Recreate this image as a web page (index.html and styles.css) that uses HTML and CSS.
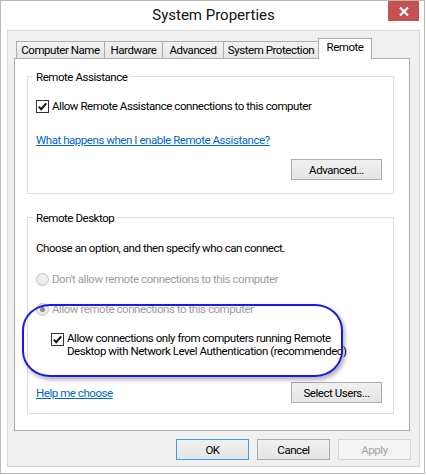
FILE: index.html
```html
<!DOCTYPE html>
<html lang="en">

<head>
  <meta charset="UTF-8" />
  <title>System Properties</title>
  <link rel="stylesheet" href="styles.css">
</head>

<body>
  <div class="window">
    <div class="titlebar">
      <span></span>
      <div class="title">System Properties</div>
      <div class="close">
        <svg width="10" height="9" viewBox="0 0 10 9"><path d="M1 0.5 L9 8.5 M9 0.5 L1 8.5" stroke="#fff" stroke-width="2.2" /></svg>
      </div>
    </div>

    <div class="client">
      <div class="tabs">
        <div class="tab t-name">Computer Name</div>
        <div class="tab t-hw">Hardware</div>
        <div class="tab t-adv">Advanced</div>
        <div class="tab t-prot">System Protection</div>
        <div class="tab active">Remote</div>
      </div>

      <div class="panel">
        <!-- Remote Assistance -->
        <div class="group">
          <span class="group-title">Remote Assistance</span>
          <div class="row">
            <svg class="box" width="13" height="13" viewBox="0 0 13 13"><rect x="0.5" y="0.5" width="12" height="12" fill="#fff" stroke="#333" /><path d="M2.8 6.6 L5.2 9.2 L10.2 3.4" fill="none" stroke="#111" stroke-width="2" /></svg>
            <span>Allow Remote Assistance connections to this computer</span>
          </div>
          <a class="link first-link" href="#">What happens when I enable Remote Assistance?</a>
          <div class="button-row">
            <button class="btn">Advanced...</button>
          </div>
        </div>

        <!-- Remote Desktop -->
        <div class="group second">
          <span class="group-title">Remote Desktop</span>
          <div class="intro">Choose an option, and then specify who can connect.</div>
          <div class="row disabled radio-one">
            <span class="radio"></span>
            <span>Don't allow remote connections to this computer</span>
          </div>
          <div class="row disabled radio-two">
            <span class="radio on"></span>
            <span>Allow remote connections to this computer</span>
          </div>
          <div class="nla">
            <svg class="box" width="13" height="13" viewBox="0 0 13 13"><rect x="0.5" y="0.5" width="12" height="12" fill="#fff" stroke="#333" /><path d="M2.8 6.6 L5.2 9.2 L10.2 3.4" fill="none" stroke="#111" stroke-width="2" /></svg>
            <span>Allow connections only from computers running Remote<br>Desktop with Network Level Authentication (recommended)</span>
          </div>
          <div class="button-row help-row">
            <a class="link" href="#">Help me choose</a>
            <button class="btn">Select Users...</button>
          </div>
        </div>

        <div class="mark"></div>
      </div>

      <div class="actions">
        <button class="btn dialog default">OK</button>
        <button class="btn dialog">Cancel</button>
        <button class="btn dialog" disabled>Apply</button>
      </div>
    </div>
  </div>
</body>

</html>
```

FILE: styles.css
```css
body { margin: 0; padding: 0; background: #ffffff; font-family: Roboto, "Liberation Sans", sans-serif; font-size: 11.5px; line-height: 16px; letter-spacing: -0.45px; color: #000; }

.window {
  box-sizing: border-box;
  width: 425px;
  height: 474px;
  border: 1px solid #b9b9b9;
  background: #ffffff;
  padding: 0 4px 6px 6px;
  display: flex;
  flex-direction: column;
}

/* title bar */
.titlebar { height: 29px; flex: none; display: grid; grid-template-columns: 1fr auto 1fr; align-items: start; }
.title { font-size: 15px; line-height: 28px; letter-spacing: 0; color: #111; }
.close {
  justify-self: end;
  width: 31px;
  height: 20px;
  margin-right: 1px;
  background: #c75050;
  display: flex;
  align-items: center;
  justify-content: center;
}
.close svg { display: block; }

/* client area */
.client {
  flex: 1;
  min-height: 0;
  border: 1px solid #d4d4d4;
  background: #f0f0f0;
  padding: 7px 9px 7px 6px;
  display: flex;
  flex-direction: column;
}

.tabs { display: flex; align-items: flex-end; height: 20px; padding-left: 2px; }
.tab {
  height: 17px;
  box-sizing: border-box;
  border: 1px solid #acacac;
  border-bottom: none;
  margin-right: -1px;
  line-height: 16px;
  text-align: center;
  background: linear-gradient(#f2f2f2, #e6e6e6);
  white-space: nowrap;
}
.t-name { width: 89px; }
.t-hw { width: 59px; }
.t-adv { width: 62px; }
.t-prot { width: 96px; }
.tab.active {
  width: 54px;
  height: 21px;
  margin-bottom: -1px;
  line-height: 17px;
  background: #ffffff;
  position: relative;
  z-index: 1;
}

.panel {
  position: relative;
  border: 1px solid #acacac;
  background: #ffffff;
  padding: 17px 15px 16px 12px;
}

/* group boxes */
.group { border: 1px solid #dcdcdc; padding: 0 11px 13px 8px; }
.group.second { margin-top: 23px; padding-bottom: 10px; }
.group-title {
  display: block;
  width: max-content;
  margin: -8px 0 0 -3px;
  padding: 0 3px;
  background: #ffffff;
}

.row { display: flex; align-items: center; gap: 3px; height: 16px; margin-top: 13px; white-space: nowrap; }
.box { display: block; flex: none; }

.link { display: block; width: max-content; color: #0066cc; }
.first-link { margin-top: 18px; }

.button-row { display: flex; justify-content: flex-end; margin-top: 11px; }
.help-row { justify-content: space-between; align-items: center; margin-top: 24px; }

.btn {
  box-sizing: border-box;
  width: 91px;
  height: 21px;
  border: 1px solid #acacac;
  background: linear-gradient(#f0f0f0, #e5e5e5);
  font-family: inherit;
  font-size: 11.5px;
  letter-spacing: -0.45px;
  color: #000;
  padding: 0;
}

.intro { margin-top: 14px; }
.radio-one { margin-top: 15px; }
.radio-two { margin-top: 14px; }
.disabled { color: #9d9d9d; }

.radio {
  box-sizing: border-box;
  width: 13px;
  height: 13px;
  border: 1px solid #c4c4c4;
  border-radius: 50%;
  background: radial-gradient(circle at 50% 40%, #f4f4f4, #e2e2e2);
  flex: none;
  display: flex;
  align-items: center;
  justify-content: center;
}
.radio.on::after { content: ""; width: 5px; height: 5px; border-radius: 50%; background: #8a8a8a; }

.nla { display: flex; gap: 3px; margin-top: 15px; padding-left: 15px; line-height: 13px; white-space: nowrap; }
.nla .box { margin-top: 1px; }

/* hand-drawn highlight around the NLA option */
.mark {
  position: absolute;
  left: 7px;
  top: 245px;
  width: 321px;
  height: 73px;
  box-sizing: border-box;
  border: 2px solid #1a1ae6;
  border-radius: 28px / 26px;
  box-shadow: 2px 3px 4px rgba(0, 0, 0, 0.3);
  pointer-events: none;
}

.actions { display: flex; justify-content: flex-end; gap: 8px; margin-top: 8px; margin-right: -1px; }
.btn.dialog { width: 73px; }
.btn.default { border-color: #3c9bf0; }
.btn[disabled] { border-color: #d5d5d5; background: #f4f4f4; color: #a3a3a3; }
```
